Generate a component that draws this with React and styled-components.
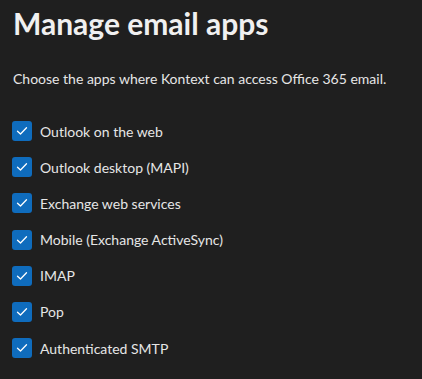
import React from 'react';
import styled, { createGlobalStyle } from 'styled-components';

const GlobalStyle = createGlobalStyle`
  html, body {
    margin: 0;
    background: #1f1f1f;
  }
  body {
    font-family: Lato, 'Open Sans', sans-serif;
  }
`;

const Page = styled.div`
  background: #1f1f1f;
  color: #ffffff;
  height: 379px;
  padding: 5px 13px 0;
  box-sizing: border-box;
`;

const Title = styled.h1`
  color: #f0f0f0;
  font-size: 30px;
  font-weight: 700;
  line-height: 36px;
  margin: 0 0 28px;
`;

const Intro = styled.p`
  color: #e6e6e6;
  font-size: 14px;
  line-height: 20px;
  margin: 0 0 32px;
`;

const List = styled.div`
  display: flex;
  flex-direction: column;
  gap: 16.2px;
`;

const Row = styled.label`
  align-items: center;
  display: flex;
  gap: 8px;
  height: 20px;
  color: #e6e6e6;
  font-size: 14px;
  margin-left: -1px;
`;

const Box = styled.span`
  align-items: center;
  background: #0f6cbd;
  border-radius: 3px;
  display: flex;
  height: 20px;
  justify-content: center;
  width: 20px;
  flex: none;
`;

const Check = () => (
  <Box>
    <svg width="12" height="12" viewBox="0 0 12 12" fill="none">
      <path d="M1.5 6.2 L4.5 9 L10.5 2.8" stroke="#fff" strokeWidth="1.3" strokeLinecap="round" strokeLinejoin="round" />
    </svg>
  </Box>
);

const apps = [
  'Outlook on the web',
  'Outlook desktop (MAPI)',
  'Exchange web services',
  'Mobile (Exchange ActiveSync)',
  'IMAP',
  'Pop',
  'Authenticated SMTP'
];

const App = () => (
  <>
    <GlobalStyle />
    <Page>
      <Title>Manage email apps</Title>
      <Intro>Choose the apps where Kontext can access Office 365 email.</Intro>
      <List>
        {apps.map(name => (
          <Row key={name}>
            <Check />
            {name}
          </Row>
        ))}
      </List>
    </Page>
  </>
);

export default App;
